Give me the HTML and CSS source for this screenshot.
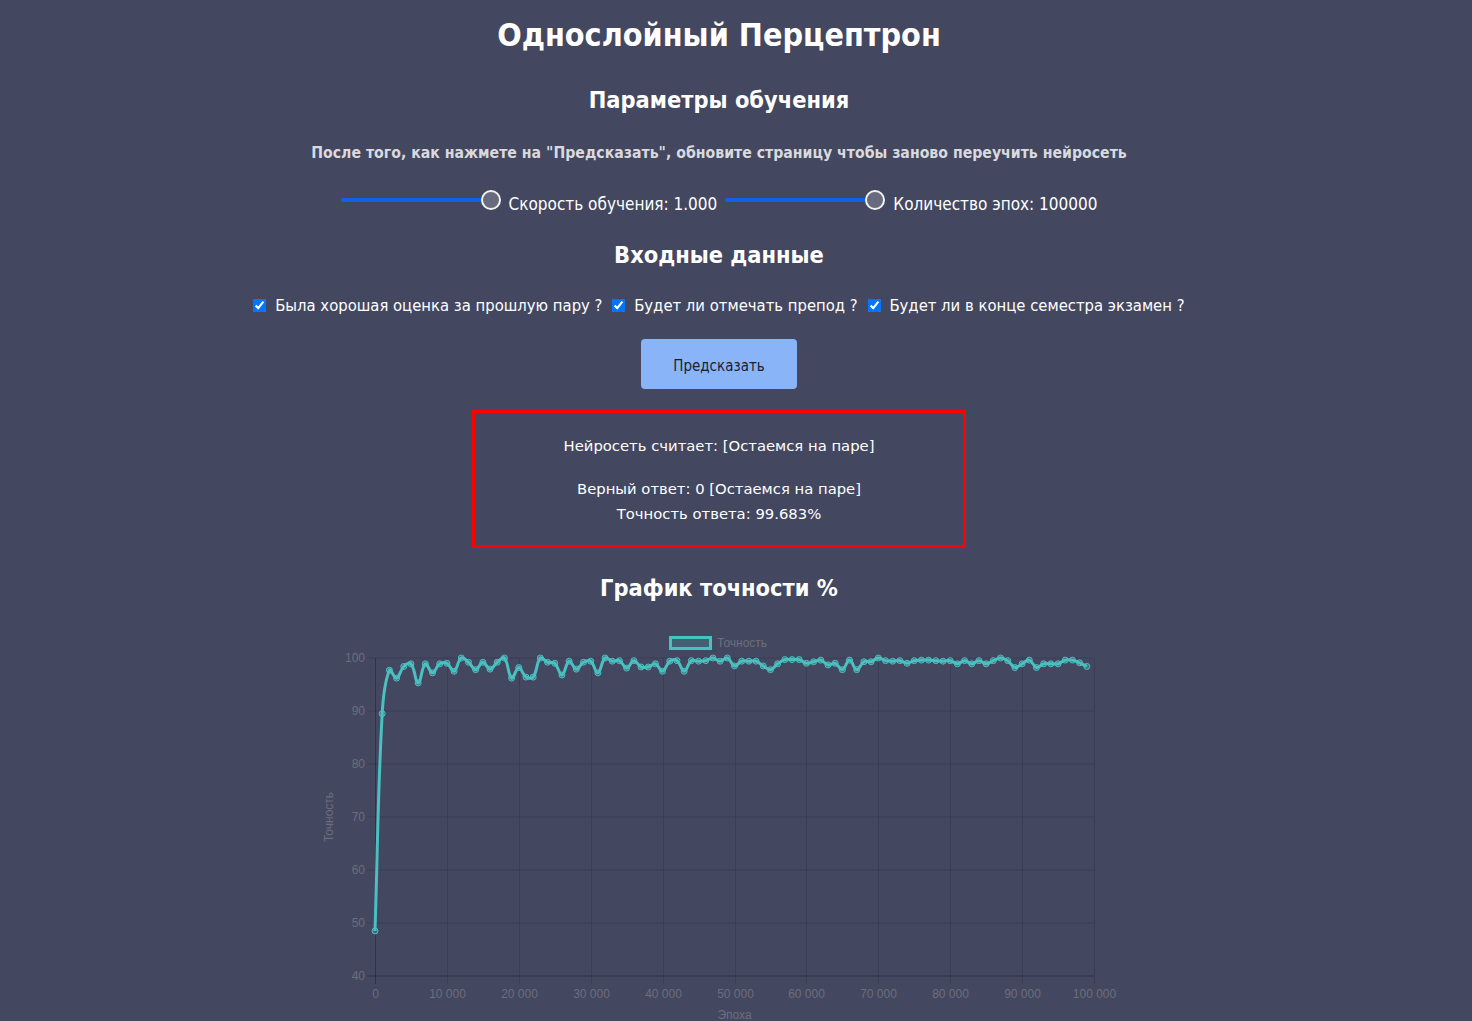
FILE: index.html
```html
<!DOCTYPE html>
<html lang="ru">
<head>
<meta charset="utf-8">
<title>Однослойный Перцептрон</title>
<link rel="stylesheet" href="styles.css">
</head>
<body>
<main class="page">
  <h1 class="title">Однослойный Перцептрон</h1>
  <h2 class="section section-params">Параметры обучения</h2>
  <p class="hint">После того, как нажмете на "Предсказать", обновите страницу чтобы заново переучить нейросеть</p>
  <div class="sliders">
    <input class="range" type="range" min="0" max="1" step="0.001" value="1">
    <span class="range-label">Скорость обучения: 1.000</span>
    <input class="range" type="range" min="0" max="100000" step="1000" value="100000">
    <span class="range-label">Количество эпох: 100000</span>
  </div>
  <h2 class="section section-input">Входные данные</h2>
  <div class="checks">
    <label class="check"><input type="checkbox" checked> Была хорошая оценка за прошлую пару ?</label>
    <label class="check"><input type="checkbox" checked> Будет ли отмечать препод ?</label>
    <label class="check"><input type="checkbox" checked> Будет ли в конце семестра экзамен ?</label>
  </div>
  <button class="predict" type="button">Предсказать</button>
  <div class="result">
    <p class="result-line result-first">Нейросеть считает: [Остаемся на паре]</p>
    <p class="result-line">Верный ответ: 0 [Остаемся на паре]</p>
    <p class="result-line">Точность ответа: 99.683%</p>
  </div>
  <h2 class="section section-chart">График точности %</h2>
  <svg class="chart" id="chart" width="800" height="410" viewBox="0 0 800 410" xmlns="http://www.w3.org/2000/svg"></svg>
</main>
<script src="script.js"></script>
</body>
</html>
```
FILE: styles.css
```css
html, body {
  margin: 0;
  padding: 0;
  background: #434760;
}
body {
  font-family: "DejaVu Sans Condensed", "DejaVu Sans", sans-serif;
  color: #ffffff;
}
.page {
  width: 1438px;
  display: flex;
  flex-direction: column;
  align-items: center;
  text-align: center;
}
.title {
  margin: 15px 0 0;
  font-size: 32px;
  line-height: 40px;
  font-weight: bold;
}
.section {
  margin: 0;
  font-size: 23.4px;
  line-height: 30px;
  font-weight: bold;
}
.section-params { margin-top: 30px; }
.hint {
  margin: 28px 0 0;
  font-size: 15.7px;
  line-height: 20px;
  font-weight: bold;
  color: #d9d9de;
}
.sliders {
  margin-top: 25px;
  display: flex;
  align-items: center;
  gap: 8px;
  height: 24px;
  font-size: 17px;
}
.range-label {
  margin-top: 8px;
}
.range {
  -webkit-appearance: none;
  appearance: none;
  width: 160px;
  height: 20px;
  margin: 0;
  background: transparent;
}
.range::-webkit-slider-runnable-track {
  height: 4px;
  border-radius: 2px;
  background: #0f62e6;
}
.range::-webkit-slider-thumb {
  -webkit-appearance: none;
  appearance: none;
  width: 20px;
  height: 20px;
  margin-top: -8px;
  border-radius: 50%;
  background: #686b7e;
  border: 2px solid #f2f2f2;
  box-sizing: border-box;
}
.section-input { margin-top: 28px; }
.checks {
  margin-top: 26px;
  display: flex;
  gap: 10px;
  font-size: 16.5px;
  line-height: 20px;
}
.check input {
  margin: 0 4px 0 0;
  width: 13px;
  height: 13px;
  vertical-align: -1px;
}
.predict {
  margin-top: 23px;
  width: 156px;
  height: 50px;
  padding: 3px 0 0;
  border: none;
  border-radius: 4px;
  background: #8ab4f8;
  color: #1d1d2b;
  font-family: "DejaVu Sans Condensed", "DejaVu Sans", sans-serif;
  font-size: 15px;
}
.result {
  margin-top: 21px;
  width: 494px;
  box-sizing: border-box;
  border: 3px solid #ff0000;
  padding: 20px 0 19px;
  font-family: "DejaVu Sans", sans-serif;
  font-size: 14.8px;
}
.result-line {
  margin: 0;
  line-height: 25px;
}
.result-first { margin-bottom: 18px; }
.section-chart { margin-top: 25px; }
.chart {
  margin-top: 17px;
  display: block;
  font-family: "Liberation Sans", Arial, sans-serif;
}
```
FILE: script.js
```js
(function () {
  var data = [48.5, 89.5, 97.7, 96.2, 98.4, 98.9, 95.3, 98.9, 97.2, 98.9,
    99.0, 97.5, 100, 99.2, 97.8, 99.2, 97.9, 99.2, 100, 96.2,
    98.2, 96.4, 96.4, 100, 99.2, 99.0, 96.8, 99.4, 97.9, 99.2,
    99.4, 97.2, 100, 99.4, 99.5, 98.1, 99.5, 98.3, 98.3, 98.9,
    97.5, 99.4, 99.5, 97.5, 99.5, 99.4, 99.5, 100, 99.4, 100,
    98.5, 99.4, 99.4, 99.4, 98.5, 97.8, 98.9, 99.7, 99.7, 99.7,
    99.0, 99.3, 99.6, 98.7, 99.0, 97.8, 99.6, 97.8, 99.3, 99.3,
    100, 99.5, 99.4, 99.5, 99.0, 99.5, 99.6, 99.6, 99.5, 99.4,
    99.5, 98.9, 99.5, 98.9, 99.5, 98.9, 99.5, 100, 99.5, 98.2,
    98.9, 99.6, 98.2, 98.9, 98.9, 98.9, 99.6, 99.6, 99.1, 98.4];
  var NS = "http://www.w3.org/2000/svg";
  var svg = document.getElementById("chart");
  var X0 = 56, X1 = 775, Y0 = 356, YT = 38;
  var grid = "rgba(0,0,0,0.12)";
  var axis = "rgba(0,0,0,0.28)";
  var tick = "#6c6e7c";
  function el(name, attrs, text) {
    var e = document.createElementNS(NS, name);
    for (var k in attrs) e.setAttribute(k, attrs[k]);
    if (text !== undefined) e.textContent = text;
    svg.appendChild(e);
    return e;
  }
  function xs(epoch) { return X0 + (X1 - X0) * epoch / 100000; }
  function ys(v) { return Y0 - (Y0 - YT) * (v - 40) / 60; }

  for (var v = 40; v <= 100; v += 10) {
    var y = ys(v);
    el("line", { x1: X0 - 8, x2: X1, y1: y, y2: y, stroke: v === 40 ? axis : grid, "stroke-width": 1 });
    el("text", { x: X0 - 10, y: y + 4, "text-anchor": "end", fill: tick, "font-size": 12 }, String(v));
  }
  for (var i = 0; i <= 10; i++) {
    var x = Math.round(xs(i * 10000)) + 0.5;
    el("line", { x1: x, x2: x, y1: YT, y2: Y0 + 8, stroke: i === 0 ? axis : grid, "stroke-width": 1 });
    var lab = i === 0 ? "0" : (i * 10) + " 000";
    el("text", { x: x, y: Y0 + 22, "text-anchor": "middle", fill: tick, "font-size": 12 }, lab);
  }
  el("text", { x: (X0 + X1) / 2, y: 399, "text-anchor": "middle", fill: tick, "font-size": 12 }, "Эпоха");
  el("text", { x: 0, y: 0, "text-anchor": "middle", fill: tick, "font-size": 12,
    transform: "translate(14," + ((YT + Y0) / 2) + ") rotate(-90)" }, "Точность");
  el("rect", { x: 351.5, y: 17.5, width: 40, height: 11, fill: "rgba(75,192,192,0.2)", stroke: "#4bc0c0", "stroke-width": 3 });
  el("text", { x: 398, y: 27, fill: tick, "font-size": 12 }, "Точность");

  var pts = data.map(function (d, k) { return [xs(k * 1000), ys(d)]; });
  var t = 0.4, cps = [];
  for (var j = 0; j < pts.length; j++) {
    var p0 = pts[j - 1] || pts[j], p1 = pts[j], p2 = pts[j + 1] || pts[j];
    var d01 = Math.hypot(p1[0] - p0[0], p1[1] - p0[1]);
    var d12 = Math.hypot(p2[0] - p1[0], p2[1] - p1[1]);
    var s01 = d01 / (d01 + d12 || 1), s12 = d12 / (d01 + d12 || 1);
    var fa = t * s01, fb = t * s12;
    cps.push({
      prev: [p1[0] - fa * (p2[0] - p0[0]), p1[1] - fa * (p2[1] - p0[1])],
      next: [p1[0] + fb * (p2[0] - p0[0]), p1[1] + fb * (p2[1] - p0[1])]
    });
  }
  var d = "M" + pts[0][0] + " " + pts[0][1];
  for (var m = 1; m < pts.length; m++) {
    d += " C" + cps[m - 1].next[0] + " " + cps[m - 1].next[1] + " " +
      cps[m].prev[0] + " " + cps[m].prev[1] + " " + pts[m][0] + " " + pts[m][1];
  }
  el("path", { d: d, fill: "none", stroke: "#4bc0c0", "stroke-width": 3, "stroke-linejoin": "round" });
  pts.forEach(function (p) {
    el("circle", { cx: p[0], cy: p[1], r: 3, fill: "rgba(75,192,192,0.35)", stroke: "#4bc0c0", "stroke-width": 1 });
  });
})();
```
